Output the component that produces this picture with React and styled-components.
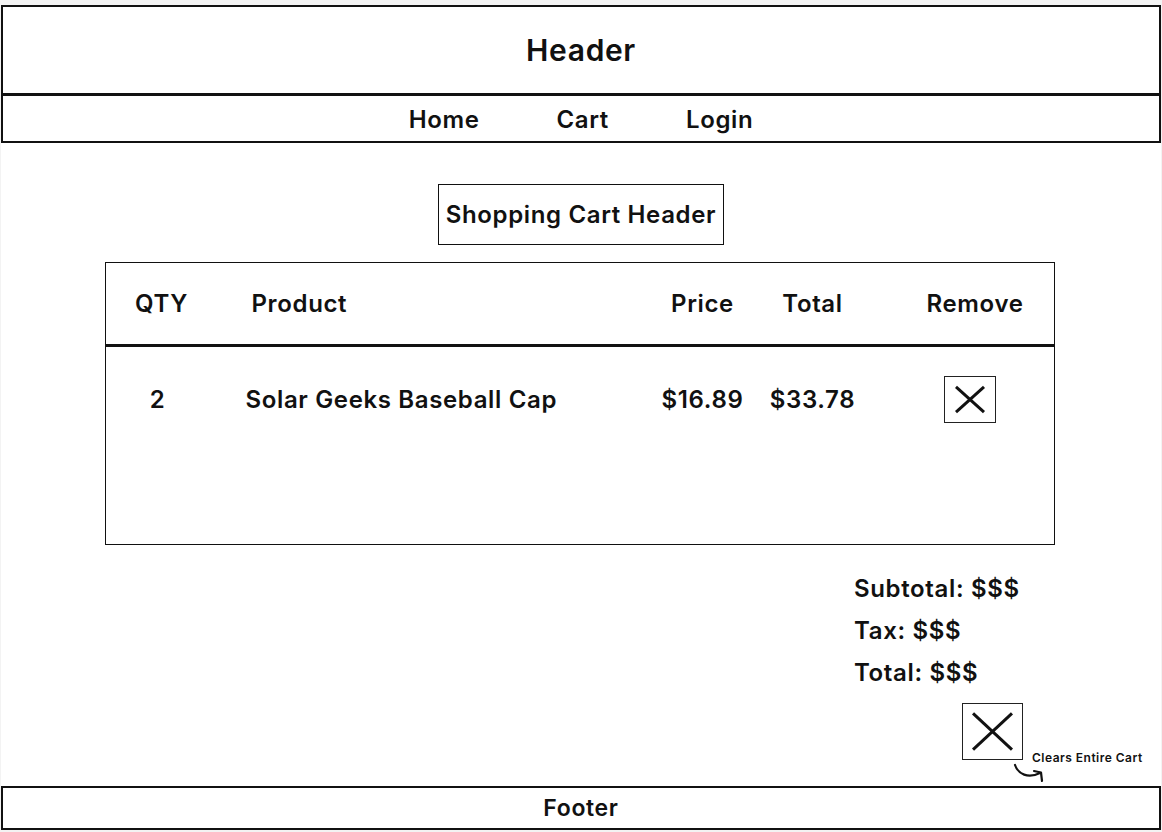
import React from "react";
import styled, { createGlobalStyle } from "styled-components";

const GlobalStyle = createGlobalStyle`
  body {
    margin: 0;
    background: #f3f3f3;
    font-family: Inter, "Noto Sans", sans-serif;
    letter-spacing: 0.04em;
    color: #111;
  }
`;

const cartItems = [
  { qty: 2, name: "Solar Geeks Baseball Cap", price: "$16.89", total: "$33.78" },
];

const navLinks = ["Home", "Cart", "Login"];

const CrossIcon = ({ inset }) => (
  <svg width="100%" height="100%" viewBox="0 0 100 100" preserveAspectRatio="none">
    <line x1={inset} y1={inset} x2={100 - inset} y2={100 - inset} stroke="#111" strokeWidth="3" vectorEffect="non-scaling-stroke" />
    <line x1={100 - inset} y1={inset} x2={inset} y2={100 - inset} stroke="#111" strokeWidth="3" vectorEffect="non-scaling-stroke" />
  </svg>
);

const App = () => {
  return (
    <>
      <GlobalStyle />
      <Page>
        <Header>Header</Header>
        <Nav>
          {navLinks.map((link) => (
            <NavLink key={link}>{link}</NavLink>
          ))}
        </Nav>

        <Main>
          <CartTitle>Shopping Cart Header</CartTitle>

          <Table>
            <HeadRow>
              <Cell $pad={8}>QTY</Cell>
              <Cell $left $pad={42}>Product</Cell>
              <Cell>Price</Cell>
              <Cell>Total</Cell>
              <Cell $pad={24}>Remove</Cell>
            </HeadRow>
            <Body>
              {cartItems.map((item) => (
                <ItemRow key={item.name}>
                  <Cell>{item.qty}</Cell>
                  <Cell $left $pad={36}>{item.name}</Cell>
                  <Cell>{item.price}</Cell>
                  <Cell>{item.total}</Cell>
                  <Cell $pad={14}>
                    <RemoveButton>
                      <CrossIcon inset={22} />
                    </RemoveButton>
                  </Cell>
                </ItemRow>
              ))}
            </Body>
          </Table>

          <Summary>
            <SummaryLine>Subtotal: $$$</SummaryLine>
            <SummaryLine>Tax: $$$</SummaryLine>
            <SummaryLine>Total: $$$</SummaryLine>
            <ClearRow>
              <ClearButton>
                <CrossIcon inset={17} />
              </ClearButton>
              <Note>
                Clears Entire Cart
                <NoteArrow width="34" height="24" viewBox="0 0 34 24">
                  <path d="M2 2 C5 11, 15 16, 27 10" fill="none" stroke="#111" strokeWidth="2.2" strokeLinecap="round" />
                  <path d="M21 8 L28 9.5 L29 18" fill="none" stroke="#111" strokeWidth="2.2" strokeLinecap="round" strokeLinejoin="round" />
                </NoteArrow>
              </Note>
            </ClearRow>
          </Summary>
        </Main>

        <Footer>Footer</Footer>
      </Page>
    </>
  );
};

export default App;

const Page = styled.div`
  margin: 5px 1px 0 1px;
  background: #fff;
  display: flex;
  flex-direction: column;
`;

const Header = styled.header`
  height: 86px;
  border: 2px solid #111;
  border-bottom-width: 3px;
  display: flex;
  align-items: center;
  justify-content: center;
  font-size: 30px;
  font-weight: 600;
`;

const Nav = styled.nav`
  height: 44px;
  border: 2px solid #111;
  border-top: 0;
  display: flex;
  align-items: center;
  justify-content: center;
  gap: 77px;
  padding-top: 1px;
`;

const NavLink = styled.span`
  font-size: 24px;
  font-weight: 600;
`;

const Main = styled.main`
  display: flex;
  flex-direction: column;
  align-items: center;
  padding-top: 41px;
`;

const CartTitle = styled.div`
  height: 59px;
  padding: 0 7px;
  border: 1.5px solid #111;
  display: flex;
  align-items: center;
  font-size: 24px;
  font-weight: 600;
`;

const Table = styled.div`
  margin-top: 17px;
  width: 950px;
  height: 283px;
  border: 1.5px solid #111;
  box-sizing: border-box;
  margin-left: -3px;
  display: flex;
  flex-direction: column;
`;

const rowColumns = `
  display: grid;
  grid-template-columns: 104px 443px 100px 120px 1fr;
  align-items: center;
`;

const HeadRow = styled.div`
  ${rowColumns}
  height: 81px;
  border-bottom: 3px solid #111;
`;

const Body = styled.div`
  flex: 1;
  padding-top: 28px;
`;

const ItemRow = styled.div`
  ${rowColumns}
  height: 48px;
`;

const Cell = styled.div`
  font-size: 24px;
  font-weight: 600;
  display: flex;
  justify-content: ${(p) => (p.$left ? "flex-start" : "center")};
  padding-left: ${(p) => (p.$pad ? `${p.$pad}px` : 0)};
`;

const RemoveButton = styled.div`
  width: 50px;
  height: 45px;
  border: 1.5px solid #222;
`;

const Summary = styled.div`
  align-self: flex-end;
  margin-right: 139px;
  width: 168px;
  margin-top: 23px;
  display: flex;
  flex-direction: column;
`;

const SummaryLine = styled.div`
  font-size: 24px;
  font-weight: 600;
  line-height: 42px;
  white-space: nowrap;
`;

const ClearRow = styled.div`
  margin-top: 9px;
  margin-left: 108px;
  display: flex;
  align-items: flex-end;
  gap: 9px;
`;

const ClearButton = styled.div`
  flex: none;
  width: 59px;
  height: 55px;
  border: 1.5px solid #222;
`;

const Note = styled.div`
  position: relative;
  white-space: nowrap;
  font-size: 12px;
  font-weight: 600;
  letter-spacing: 0.04em;
  margin-bottom: -5px;
`;

const NoteArrow = styled.svg`
  position: absolute;
  left: -19px;
  top: 13px;
`;

const Footer = styled.footer`
  margin-top: 26px;
  height: 40px;
  border: 2px solid #111;
  display: flex;
  align-items: center;
  justify-content: center;
  font-size: 23px;
  font-weight: 600;
`;
